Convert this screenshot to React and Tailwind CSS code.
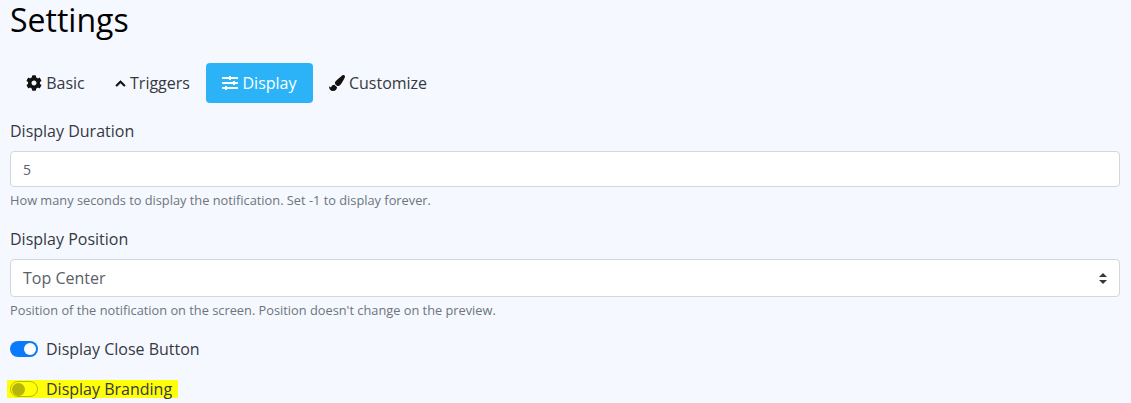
import { FaCog, FaChevronUp, FaSlidersH, FaPaintBrush } from 'react-icons/fa';

const tabs = [
  { label: 'Basic', icon: FaCog, size: 'text-[16px]', active: false, width: 'w-[91px]' },
  { label: 'Triggers', icon: FaChevronUp, size: 'text-[11px] stroke-[24px]', active: false, width: 'w-[103px] mr-[2px]' },
  { label: 'Display', icon: FaSlidersH, size: 'text-[16px]', active: true, width: 'w-[107px]' },
  { label: 'Customize', icon: FaPaintBrush, size: 'text-[16px]', active: false, width: 'w-[130px]' },
];

function Field({ label, help, children }) {
  return (
    <div className="mb-[17px]">
      <label className="block mb-[8px] text-[16px] leading-[24px] text-[#37393f]">{label}</label>
      {children}
      <small className="block mt-[4px] text-[12.8px] leading-[19px] text-[#6c757d]">{help}</small>
    </div>
  );
}

export default function App() {
  return (
    <div className="h-[403px] overflow-hidden bg-[#f5f8ff] pl-[10px] pr-[11px] font-['Open_Sans',sans-serif]">
      <h1 className="text-[32px] leading-[38px] text-black mt-[1px] mb-[24px]">Settings</h1>

      {/* Tabs */}
      <div className="flex h-[40px] mb-[16px]">
        {tabs.map((tab) => {
          const Icon = tab.icon;
          return (
            <div
              key={tab.label}
              className={`${tab.width} flex items-center justify-center gap-[4px] rounded-[4px] text-[16px] ${
                tab.active ? 'bg-[#2cb3f7] text-white' : 'text-[#37393f]'
              }`}
            >
              <Icon className={`${tab.size} ${tab.active ? 'text-white' : 'text-[#111]'}`} />
              <span>{tab.label}</span>
            </div>
          );
        })}
      </div>

      <Field label="Display Duration" help="How many seconds to display the notification. Set -1 to display forever.">
        <div className="h-[36px] flex items-center px-[12px] bg-white border border-[#d3d6dc] rounded-[4px] text-[14px] text-[#5a6068]">
          5
        </div>
      </Field>

      <Field label="Display Position" help="Position of the notification on the screen. Position doesn't change on the preview.">
        <div className="h-[38px] flex items-center justify-between px-[12px] bg-white border border-[#d3d6dc] rounded-[4px] text-[16px] text-[#5a6068]">
          <span>Top Center</span>
          <svg width="8" height="11" viewBox="0 0 8 11" className="text-[#343a40]">
            <path d="M4 0 L8 4 H0 Z M4 11 L0 7 H8 Z" fill="currentColor" />
          </svg>
        </div>
      </Field>

      {/* Toggles */}
      <div className="flex items-center gap-[8px] h-[24px] mt-[16px] mb-[19px] text-[16px] text-[#37393f]">
        <div className="w-[28px] h-[16px] rounded-full bg-[#0b7bfb] flex items-center justify-end pr-[2px]">
          <div className="w-[12px] h-[12px] rounded-full bg-white" />
        </div>
        <span>Display Close Button</span>
      </div>

      <div className="flex items-center gap-[8px] h-[18px] w-[171px] -ml-[3px] pl-[3px] bg-[#ffff0a] text-[16px] text-[#37393f]">
        <div className="w-[28px] h-[16px] rounded-full border border-[#b9b90a] flex items-center pl-[1px]">
          <div className="w-[13px] h-[13px] rounded-full bg-[#b5b50a]" />
        </div>
        <span>Display Branding</span>
      </div>
    </div>
  );
}
